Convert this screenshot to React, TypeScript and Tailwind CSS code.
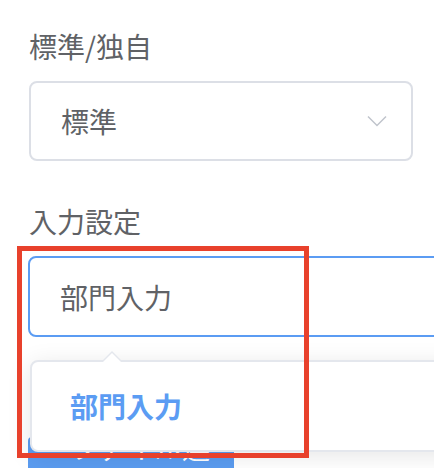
import React from "react";

const font = "font-['Noto_Sans_CJK_JP','Noto_Sans',sans-serif]";

export default function App() {
  return (
    <div className={`relative w-[434px] h-[468px] overflow-hidden bg-white ${font}`}>
      <div className="flex flex-col pl-[29px] pt-[26px]">
        {/* 標準/独自 */}
        <div className="h-[40px] leading-[40px] text-[28px] text-[#606266]">標準/独自</div>
        <div className="mt-[15px] w-[384px] h-[80px] border-2 border-[#dcdfe6] rounded-[8px] flex items-center justify-between pl-[30px] pr-[24px]">
          <span className="text-[28px] text-[#606266]">標準</span>
          <svg width="20" height="12" viewBox="0 0 20 12" fill="none">
            <path d="M1 1.5 L10 10.5 L19 1.5" stroke="#c0c4cc" strokeWidth="1.5" />
          </svg>
        </div>

        {/* 入力設定 */}
        <div className="mt-[40px] h-[40px] leading-[40px] text-[28px] text-[#606266]">入力設定</div>
        <div className="relative mt-[15px] flex flex-col gap-[100px] -ml-[1px]">
          <div className="w-[480px] h-[81px] border-2 border-[#5b9cf3] rounded-[8px] flex items-center pl-[30px]">
            <span className="text-[28px] text-[#606266]">部門入力</span>
          </div>

          {/* ファイル選択 button, mostly hidden behind dropdown */}
          <div className="w-[206px] h-[62px] bg-[#5b9cf0] rounded-[4px] flex items-center pl-[42px] text-[28px] text-white">
            ファイル選択
          </div>

          {/* dropdown */}
          <div className="absolute left-[2px] top-[104px] w-[480px] h-[92px] bg-white border-2 border-[#e4e7ed] rounded-[8px] shadow-[0_4px_24px_rgba(0,0,0,0.1)] flex items-center pl-[38px]">
            <span className="text-[28px] font-bold text-[#5b9cf3]">部門入力</span>
            <div className="absolute left-[69px] -top-[11px] w-0 h-0 border-x-[11px] border-x-transparent border-b-[11px] border-b-[#e4e7ed]" />
            <div className="absolute left-[70px] -top-[9px] w-0 h-0 border-x-[10px] border-x-transparent border-b-[10px] border-b-white" />
          </div>
        </div>
      </div>

      {/* red highlight */}
      <div className="absolute left-[17px] top-[246px] w-[292px] h-[212px] border-[5px] border-[#e8412c]" />
    </div>
  );
}
